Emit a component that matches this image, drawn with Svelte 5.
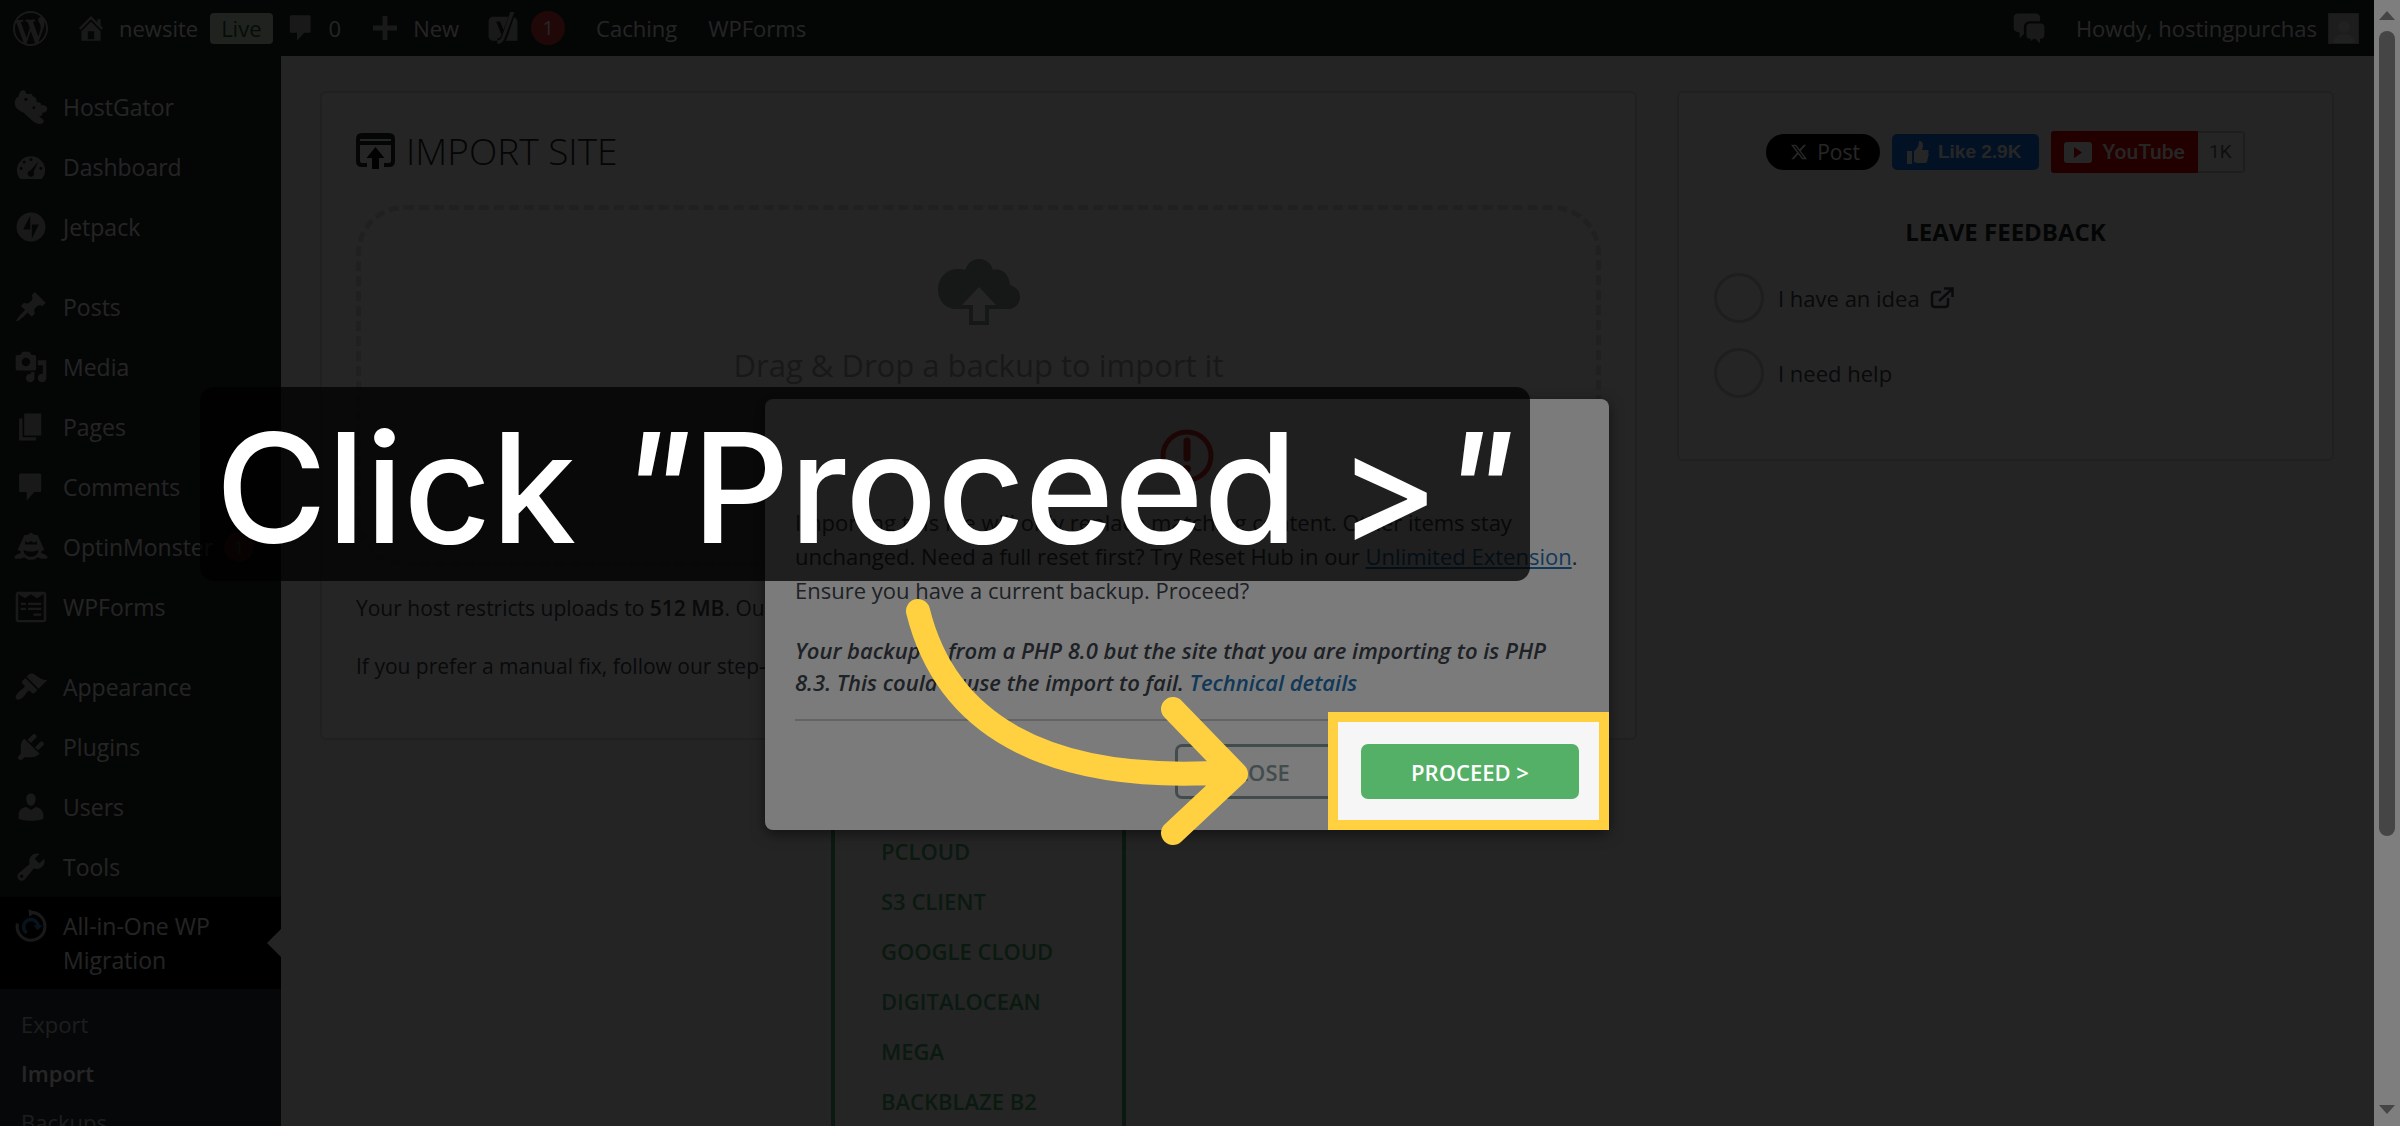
<script>
  const icons = {
    wordpress: 'M20 10c0-5.51-4.49-10-10-10C4.48 0 0 4.49 0 10c0 5.52 4.48 10 10 10 5.51 0 10-4.48 10-10zM7.78 15.37L4.37 6.22c.55-.02 1.17-.08 1.17-.08.5-.06.44-1.13-.06-1.11 0 0-1.45.11-2.37.11-.18 0-.37 0-.58-.01C4.12 2.69 6.87 1.11 10 1.11c2.33 0 4.45.87 6.05 2.34-.68-.11-1.65.39-1.65 1.58 0 .74.45 1.36.9 2.1.35.61.55 1.36.55 2.46 0 1.49-1.4 5-1.4 5l-3.03-8.37c.54-.02.82-.17.82-.17.5-.05.44-1.25-.06-1.22 0 0-1.44.12-2.38.12-.87 0-2.33-.12-2.33-.12-.5-.03-.56 1.2-.06 1.22l.92.08 1.26 3.41zM17.41 10c.24-.64.74-1.87.43-4.25.7 1.29 1.05 2.71 1.05 4.25 0 3.29-1.73 6.24-4.4 7.78.97-2.59 1.94-5.2 2.92-7.78zM6.1 18.09C3.12 16.65 1.11 13.53 1.11 10c0-1.3.23-2.48.72-3.59C3.25 10.3 4.67 14.2 6.1 18.09zm4.03-6.63l2.58 6.98c-.86.29-1.76.45-2.71.45-.79 0-1.57-.11-2.29-.33.81-2.38 1.62-4.74 2.42-7.1z',
    home: 'M16 8.5l1.53 1.53-1.06 1.06L10 4.6l-6.47 6.49-1.06-1.06L10 2.5l4 4v-2h2v4zm-6-2.46l6 5.99V18H4v-5.97zM12 17v-5H8v5h4z',
    comment: 'M5 2h10c.6 0 1 .4 1 1v9c0 .6-.4 1-1 1h-3l-4.500 5v-5H4c-.6 0-1-.4-1-1V3c0-.6.4-1 1-1z',
    plus: 'M17.500 8.500v3h-6v6h-3v-6h-6v-3h6v-6h3v6z',
    yoast: 'M4 3h9.300l-3 8.200L8.200 6H5.700l3.400 8.200c-.6 1.700-1.200 2.300-2.600 2.400V18H4c-1.700 0-3-1.300-3-3V6c0-1.700 1.300-3 3-3zM14.500 0h2.600l-5.800 15.600C10.300 18.300 9 19.900 6.500 20v-2.200c1.600-.2 2.300-1 2.900-2.700l.2-.6zM16.900 3.300C18.100 3.800 19 4.800 19 6v12h-7.500c.6-.9 1-1.900 1.400-2.900z',
    hostgator: 'M5.500 0c1 .3 1.500 1.200 1.600 2.200 1.200.3 2 .3 3-.2.6.8.8 1.500 1.500 2 1.600.7 1.800 1.800 1.700 3.200 1.700-.3 3 .5 2.800 2 1.600-.6 3.400.2 3.400 1.900 0 1.600-1.200 2.500-2.800 2.200.1 1.700-.8 2.200-2.200 2.100 2 1.200 3.600 2.300 2.800 3.700-1.300 1.600-4.600.8-6.400-1L5.500 13.300C2.400 12 .3 10.300.5 7.500c.1-1.800.7-3 2.200-3.500C3 2.100 3.500.6 5.500 0zM7 4.500a1 1 0 1 0 0 2 1 1 0 0 0 0-2zm4.700 5.100a.8.8 0 1 0 0 1.600.8.8 0 0 0 0-1.600z',
    dashboard: 'M3.800 17h12.400c1.400-1.400 2.100-3.200 2.100-5A8.300 8.300 0 0 0 1.700 12c0 1.800.7 3.600 2.100 5zM10 4.700a.9.900 0 1 1 0 1.800.9.900 0 0 1 0-1.800zM6 6.200A.9.900 0 1 1 6 8a.9.900 0 0 1 0-1.800zm8.600.3l-3.100 6.300a1.900 1.900 0 1 1-1.800-.8zM4.200 9.900a.9.900 0 1 1 0 1.800.9.900 0 0 1 0-1.800zm11.600 0a.9.900 0 1 1 0 1.800.9.900 0 0 1 0-1.800z',
    jetpack: 'M10 1.500a8.500 8.500 0 1 0 0 17 8.500 8.500 0 0 0 0-17zM9.600 11.400H5.400l4.200-8.200zm.9 5.400V8.600h4.200z',
    posts: 'M10.440 3.020l1.820-1.820 6.360 6.350-1.830 1.820c-1.050-.68-2.480-.57-3.410.36l-.75.75c-.92.93-1.040 2.350-.35 3.410l-1.830 1.820-2.410-2.410-2.800 2.790c-.42.42-3.380 2.710-3.800 2.290s1.860-3.390 2.280-3.810l2.790-2.790L4.100 9.360l1.830-1.820c1.050.69 2.480.57 3.400-.36l.75-.75c.93-.92 1.050-2.350.36-3.410z',
    media: 'M13 11V4c0-.55-.45-1-1-1h-1.670L9 1H5L3.670 3H2c-.55 0-1 .45-1 1v7c0 .55.45 1 1 1h10c.55 0 1-.45 1-1zM7 4.500c1.380 0 2.500 1.120 2.500 2.500S8.380 9.500 7 9.500 4.500 8.380 4.500 7 5.620 4.500 7 4.500zM14 6h5v10.500c0 1.380-1.120 2.500-2.500 2.500S14 17.880 14 16.500s1.120-2.500 2.500-2.500c.17 0 .34.02.5.05V9h-3V6zm-4 8.050V13h2v3.500c0 1.380-1.120 2.500-2.500 2.500S7 17.880 7 16.500 8.120 14 9.500 14c.17 0 .34.02.5.05z',
    pages: 'M6 15V2h10v13H6zm-1 1h8v2H3V5h2v11z',
    monster: 'M10 1.500l1.800 1.300 2.200.3.800 2 1.200 2.400 2 4.500c-1.200-.4-2 .2-2.100 1.300.9.900 2.600.8 3.700 2.300.3 1-.6 1.800-1.500 1.200-1.700.5-3-.2-4.100-.8-2.300 2-5.700 2-8 0-1.100.6-2.400 1.300-4.100.8-.9.600-1.800-.2-1.500-1.200 1.100-1.500 2.800-1.400 3.700-2.300-.1-1.100-.9-1.700-2.100-1.300l2-4.500 1.200-2.400.8-2 2.200-.3zM6.500 6.500v2h7v-2l-1.700 1-1.800-1-1.800 1zm-.8 5c1.200 1.600 7.400 1.600 8.600 0 .3 2.500-1.800 4.300-4.300 4.300s-4.600-1.800-4.300-4.300z',
    wpforms: 'M2.500 1h15c.8 0 1.500.7 1.500 1.500v15c0 .8-.7 1.500-1.500 1.500h-15c-.8 0-1.500-.7-1.500-1.500v-15C1 1.700 1.700 1 2.500 1zm0 1.300v15.400h15V2.300l-4 2.500L10 2.500 6.500 4.800zM4 7.500h3v1.300H4zm4.200 0H16v1.300H8.200zM4 10.500h3v1.300H4zm4.200 0H16v1.300H8.200zM11.500 13.800H16v1.400h-4.500z',
    appearance: 'M14.480 11.060L7.410 3.990l1.500-1.500c.5-.56 2.300-.47 3.510.32 1.210.8 1.430 1.280 2.910 2.100 1.180.64 2.450 1.260 4.450.85zm-.71.71L6.700 4.700 4.930 6.470c-.39.39-.39 1.020 0 1.410l1.060 1.060c.39.39.39 1.030 0 1.420-.6.6-1.430 1.110-2.210 1.690-.35.26-.7.53-1.010.84C1.430 14.230.4 16.080 1.400 17.070c.99 1 2.840-.03 4.180-1.360.31-.31.58-.66.85-1.020.57-.78 1.080-1.610 1.690-2.210.39-.39 1.020-.39 1.410 0l1.060 1.060c.39.39 1.020.39 1.410 0z',
    plugins: 'M13.110 4.360L9.870 7.600 8 5.730l3.240-3.240c.35-.34 1.050-.2 1.560.32.52.51.66 1.210.31 1.550zm-8 1.770l.91-1.120 9.010 9.010-1.190.84c-.71.71-2.630 1.160-3.820 1.160H6.140L4.900 17.260c-.59.59-1.540.59-2.120 0-.59-.58-.59-1.530 0-2.120l1.240-1.240v-3.880c0-1.130.4-3.190 1.090-3.890zm7.260 3.970l3.240-3.240c.34-.35 1.040-.21 1.550.31.52.51.66 1.210.31 1.550l-3.240 3.250z',
    users: 'M10 9.250c-2.270 0-2.730-3.440-2.730-3.440C7 4.020 7.820 2 9.970 2c2.160 0 2.980 2.020 2.710 3.810 0 0-.41 3.440-2.680 3.440zm0 2.570L12.720 10c2.390 0 4.520 2.330 4.520 4.530v2.490s-3.650 1.130-7.240 1.130c-3.650 0-7.240-1.130-7.240-1.130v-2.490c0-2.250 1.940-4.480 4.470-4.480z',
    tools: 'M16.680 9.770c-1.340 1.340-3.300 1.670-4.950.99l-5.410 6.520c-.99.99-2.590.99-3.580 0s-.99-2.590 0-3.570l6.520-5.420c-.68-1.650-.35-3.610.99-4.950 1.280-1.280 3.120-1.620 4.720-1.060l-2.890 2.890 2.820 2.820 2.860-2.870c.53 1.580.18 3.390-1.080 4.650zM3.810 16.210c.4.39 1.040.39 1.430 0 .4-.4.4-1.040 0-1.430-.39-.4-1.030-.4-1.430 0-.39.39-.39 1.030 0 1.430z',
    chat: 'M3.500 1.500h10.500c1.500 0 2.500 1 2.500 2.500V6H10.500C8.600 6 7 7.400 7 9.300v4.200L4.500 16v-3.500C2.500 12.500 1 11.500 1 10V4c0-1.500 1-2.500 2.500-2.500zM10.500 7.300H17c1.200 0 2 .8 2 2v5c0 1.200-.8 2-2 2h-.5v2.700l-2.800-2.700h-1l-1.700 1.500v-1.500h-.5c-1.200 0-2-.8-2-2v-5c0-1.200.8-2 2-2z'
  };

  const menuGroups = [
    [
      { label: 'HostGator', icon: 'hostgator' },
      { label: 'Dashboard', icon: 'dashboard' },
      { label: 'Jetpack', icon: 'jetpack' }
    ],
    [
      { label: 'Posts', icon: 'posts' },
      { label: 'Media', icon: 'media' },
      { label: 'Pages', icon: 'pages' },
      { label: 'Comments', icon: 'comment' },
      { label: 'OptinMonster', icon: 'monster', count: 1 },
      { label: 'WPForms', icon: 'wpforms' }
    ],
    [
      { label: 'Appearance', icon: 'appearance' },
      { label: 'Plugins', icon: 'plugins' },
      { label: 'Users', icon: 'users' },
      { label: 'Tools', icon: 'tools' }
    ]
  ];

  const providers = ['pCloud', 'S3 Client', 'Google Cloud', 'DigitalOcean', 'Mega', 'Backblaze B2'];

  let feedback = $state('');
</script>

{#snippet icon(name)}
  <svg class="icon" viewBox="0 0 20 20" aria-hidden="true">
    <path fill="currentColor" fill-rule="evenodd" d={icons[name]} />
  </svg>
{/snippet}

<div class="screen">
  <div class="page">
    <header class="adminbar">
      <nav class="bar-left" aria-label="Toolbar">
        <a class="bar-logo" href="#about" aria-label="About WordPress">{@render icon('wordpress')}</a>
        <a class="bar-site" href="#site">{@render icon('home')}<span>newsite</span><span class="live">Live</span></a>
        <a class="bar-comments" href="#comments">{@render icon('comment')}<span>0</span></a>
        <a class="bar-new" href="#new">{@render icon('plus')}<span>New</span></a>
        <a class="bar-seo" href="#seo" aria-label="SEO, 1 notification">{@render icon('yoast')}<span class="count">1</span></a>
        <a class="bar-text" href="#caching">Caching</a>
        <a class="bar-text" href="#wpforms">WPForms</a>
      </nav>
      <div class="bar-right">
        <a class="bar-chat" href="#chat" aria-label="Notes">{@render icon('chat')}</a>
        <a class="bar-user" href="#profile">
          <span>Howdy, hostingpurchas</span>
          <svg class="avatar" viewBox="0 0 31 31" aria-hidden="true">
            <rect width="31" height="31" fill="#a0a0a0" />
            <rect x="1" y="1" width="29" height="29" fill="#c4c4c4" />
            <circle cx="16" cy="14" r="6" fill="#dcdcdc" />
            <path d="M5 30c1-6 5-9 11-9s10 3 11 9z" fill="#dcdcdc" />
          </svg>
        </a>
      </div>
    </header>

    <div class="body">
      <nav class="sidebar" aria-label="Main menu">
        {#each menuGroups as group}
          <ul>
            {#each group as item}
              <li>
                <a href="#{item.icon}">
                  {@render icon(item.icon)}
                  <span>{item.label}</span>
                  {#if item.count}<span class="count">{item.count}</span>{/if}
                </a>
              </li>
            {/each}
          </ul>
        {/each}
        <a class="current" href="#migration">
          <svg class="icon" viewBox="0 0 20 20" fill="none" aria-hidden="true">
            <path d="M2 8.500a8.200 8.200 0 1 0 8-6.500" stroke="#a7aaad" stroke-width="1.800" />
            <path d="M8.500 0l4 2-3.500 2.600z" fill="#a7aaad" />
            <path d="M7.500 14a4.300 4.300 0 1 1 6.800-3.500" stroke="#2f86c4" stroke-width="2" />
            <path d="M11.500 9.500h5.400l-3 3z" fill="#2f86c4" />
          </svg>
          <span>All-in-One WP Migration</span>
        </a>
        <ul class="submenu">
          <li><a href="#export">Export</a></li>
          <li><a class="active" href="#import">Import</a></li>
          <li><a href="#backups">Backups</a></li>
        </ul>
      </nav>

      <main>
        <section class="panel import">
          <h1>
            <svg class="import-icon" viewBox="0 0 39 36" aria-hidden="true">
              <path d="M11 32H6q-4 0-4-4V6q0-4 4-4h27q4 0 4 4v22q0 4-4 4h-5M2 10h35" fill="none" stroke="#1d2327" stroke-width="4" />
              <path d="M4 3h31v3H4z" fill="#1d2327" />
              <path d="M19.500 14l9 11H23v11h-7V25h-5.500z" fill="#111" />
            </svg>
            <span>IMPORT SITE</span>
          </h1>
          <div class="dropzone">
            <svg class="cloud" viewBox="0 0 82 66" aria-hidden="true">
              <path fill="#979a9c" fill-rule="evenodd" d="M18 50C8 50 0 42 0 31 0 18 9 10 20 10c3 0 5 0 7 1C30 4 34 0 41 0s12 4 14 11c9-2 16 4 17 15 6 2 10 6 10 12 0 7-5 12-12 12H51v16H31V50zM41 28L24 46h11v16h12V46h11z" />
            </svg>
            <p>Drag &amp; Drop a backup to import it</p>
            <ul class="providers">
              {#each providers as provider}
                <li><a href="#{provider}">{provider}</a></li>
              {/each}
            </ul>
          </div>
          <p class="note">Your host restricts uploads to <strong>512 MB</strong>. Our Unlimited Extension bypasses this!</p>
          <p class="note">If you prefer a manual fix, follow our step-by-step guide on raising your upload limit.</p>
        </section>

        <aside class="panel side">
          <div class="social">
            <button class="post" type="button">
              <svg viewBox="0 0 24 24" aria-hidden="true"><path fill="currentColor" d="M18.240 2.250h3.310l-7.230 8.260 8.500 11.240H16.170l-5.210-6.820L4.990 21.750H1.680l7.730-8.840L1.250 2.250H8.080l4.710 6.230zm-1.160 17.520h1.830L7.080 4.130H5.120z" /></svg>
              <span>Post</span>
            </button>
            <button class="like" type="button">
              <svg viewBox="0 0 22 23" aria-hidden="true"><path fill="currentColor" d="M0 10h5v13H0zM7 10c3-2 5-5 5-10 3 0 4 2 4 4 0 2-.500 3-1 5h5c2 0 2 2 1 3 1 1 1 2 0 3 .6 1 .3 2-.6 3 .4 2-.6 4-2.400 4H11c-2 0-3-1-4-1z" /></svg>
              <span>Like 2.9K</span>
            </button>
            <div class="youtube">
              <button type="button">
                <svg viewBox="0 0 28 21" aria-hidden="true"><rect width="28" height="21" rx="3" fill="currentColor" /><path d="M10 5l8 5.500-8 5.500z" fill="#e60000" /></svg>
                <span>YouTube</span>
              </button>
              <span class="subs">1K</span>
            </div>
          </div>
          <h2>LEAVE FEEDBACK</h2>
          <div class="choice">
            <input id="idea" type="radio" name="feedback" value="idea" bind:group={feedback} />
            <label for="idea">I have an idea
              <svg viewBox="0 0 24 22" aria-hidden="true"><path fill="none" stroke="currentColor" stroke-width="2.500" d="M11 5H5Q2 5 2 8v9q0 3 3 3h10q3 0 3-3v-6M9 14L22 2M14 1.500h8.500V10" /></svg>
            </label>
          </div>
          <div class="choice">
            <input id="help" type="radio" name="feedback" value="help" bind:group={feedback} />
            <label for="help">I need help</label>
          </div>
        </aside>
      </main>
    </div>

    <div class="backdrop">
      <div class="dialog" role="dialog" aria-modal="true" aria-label="Import confirmation">
        <svg class="alert" viewBox="0 0 54 54" aria-hidden="true">
          <circle cx="27" cy="27" r="24" fill="none" stroke="#e0352b" stroke-width="5" />
          <path d="M27 12v17" stroke="#e0352b" stroke-width="7" stroke-linecap="round" />
          <circle cx="27" cy="40" r="4" fill="#e0352b" />
        </svg>
        <p class="message">Importing this file will only replace matching content. Other items stay unchanged. Need a full reset first? Try Reset Hub in our <a href="#unlimited">Unlimited Extension</a>. Ensure you have a current backup. Proceed?</p>
        <p class="warning">Your backup is from a PHP 8.0 but the site that you are importing to is PHP 8.3. This could cause the import to fail. <a href="#details">Technical details</a></p>
        <div class="actions">
          <button class="close" type="button">CLOSE</button>
          <button class="proceed" type="button">PROCEED &gt;</button>
        </div>
        <div class="spotlight"></div>
      </div>
    </div>
  </div>

  <div class="scrollbar" aria-hidden="true">
    <svg viewBox="0 0 16 9"><path d="M8 0l8 9H0z" fill="#8b8b8b" /></svg>
    <div class="thumb"></div>
    <svg viewBox="0 0 16 9"><path d="M0 0h16L8 9z" fill="#8b8b8b" /></svg>
  </div>

  <div class="caption">Click <i>"</i>Proceed &gt;<i>"</i></div>

  <svg class="arrow" viewBox="0 0 360 270" aria-hidden="true">
    <path d="M18 21C45 130 140 195 330 182M273 119l63 65-63 59" fill="none" stroke="#ffd140" stroke-width="24" stroke-linecap="round" stroke-linejoin="round" />
  </svg>
</div>

<style>
  :global(body) {
    margin: 0;
  }

  .screen {
    position: relative;
    display: flex;
    height: 100vh;
    overflow: hidden;
    background: #f0f0f1;
    color: #3c434a;
    font-family: "Open Sans", "Noto Sans", sans-serif;
    font-size: 23px;
  }

  .screen :is(ul, p, h1, h2) {
    margin: 0;
    padding: 0;
    list-style: none;
  }

  .screen a {
    color: inherit;
    text-decoration: none;
  }

  .screen button {
    font: inherit;
    border: 0;
    cursor: pointer;
  }

  .icon {
    flex: none;
    width: 34px;
    height: 34px;
    color: #a7aaad;
  }

  .page {
    flex: 1;
    display: flex;
    flex-direction: column;
    position: relative;
    min-width: 0;
  }

  /* Admin bar */
  .adminbar {
    flex: none;
    display: flex;
    justify-content: space-between;
    height: 56px;
    padding: 0 15px 0 13px;
    background: #1d2327;
    color: #f0f0f1;
    font-size: 22px;
  }

  .bar-left,
  .bar-right,
  .adminbar a {
    display: flex;
    align-items: center;
  }

  .bar-left .icon {
    width: 32px;
    height: 32px;
  }

  .bar-left .bar-logo .icon {
    width: 35px;
    height: 35px;
  }

  .bar-site {
    gap: 12px;
    margin-left: 27px;
  }

  .live {
    padding: 0 11px;
    border-radius: 4px;
    background: #d7e4d0;
    color: #2c5a2c;
    line-height: 31px;
  }

  .bar-comments {
    gap: 12px;
    margin-left: 12px;
    color: #a7aaad;
  }

  .bar-new {
    gap: 12px;
    margin-left: 28px;
  }

  .bar-seo {
    gap: 12px;
    margin-left: 28px;
  }

  .bar-text {
    margin-left: 31px;
  }

  .count {
    width: 34px;
    border-radius: 17px;
    background: #d63638;
    color: #fff;
    font-size: 20px;
    line-height: 34px;
    text-align: center;
  }

  .bar-chat {
    margin-right: 30px;
  }

  .bar-user {
    gap: 11px;
  }

  .avatar {
    width: 31px;
    height: 31px;
  }

  /* Sidebar */
  .body {
    flex: 1;
    display: flex;
    min-height: 0;
  }

  .sidebar {
    flex: none;
    width: 281px;
    padding-top: 21px;
    background: #1d2327;
    color: #f0f0f1;
  }

  .sidebar ul + ul {
    margin-top: 20px;
  }

  .sidebar a {
    display: flex;
    align-items: center;
    gap: 15px;
    height: 60px;
    padding-left: 14px;
    white-space: nowrap;
  }

  .sidebar .count {
    width: 30px;
    font-size: 18px;
    line-height: 30px;
    margin-left: -4px;
  }

  .sidebar .current {
    position: relative;
    align-items: flex-start;
    height: 68px;
    padding: 12px 50px 12px 14px;
    background: #000;
    line-height: 34px;
    white-space: normal;
  }

  .sidebar .current::after {
    content: "";
    position: absolute;
    right: 0;
    top: 32px;
    border: 14px solid transparent;
    border-left: 0;
    border-right-color: #f0f0f1;
  }

  .sidebar .submenu {
    margin: 0;
    padding-top: 10px;
    height: 400px;
    background: #2c3338;
    color: #c3c4c7;
    font-size: 22px;
  }

  .submenu a {
    height: 49px;
    padding-left: 21px;
  }

  .submenu .active {
    color: #fff;
    font-weight: 600;
  }

  /* Content */
  main {
    flex: 1;
    display: flex;
    align-items: flex-start;
    gap: 40px;
    padding: 35px 40px 0 39px;
  }

  .panel {
    box-sizing: border-box;
    border: 2px solid #dadada;
    border-radius: 6px;
    background: #f9f9f9;
  }

  .import {
    flex: 1;
    min-height: 649px;
    padding: 31px 34px;
  }

  h1 {
    display: flex;
    align-items: center;
    gap: 11px;
    color: #1d2327;
    font-size: 37px;
    font-weight: 300;
    line-height: 54px;
  }

  .import-icon {
    width: 39px;
    height: 36px;
  }

  .dropzone {
    position: relative;
    display: flex;
    flex-direction: column;
    align-items: center;
    box-sizing: border-box;
    height: 361px;
    margin: 27px 0 21px;
    padding-top: 49px;
    border: 5px dashed #d9d9d9;
    border-radius: 48px;
    color: #a4a4a4;
    font-size: 31px;
    line-height: 44px;
  }

  .cloud {
    width: 82px;
    height: 66px;
    margin-bottom: 18px;
  }

  .providers {
    position: absolute;
    top: 100%;
    left: 0;
    right: 0;
    width: 287px;
    background: #f9f9f9;
    border: solid #4caf6f;
    border-width: 0 4px;
  }

  .screen .providers {
    margin: 0 auto;
    padding: 265px 0 40px;
  }

  .screen .providers a {
    display: block;
    padding-left: 46px;
    color: #4caf6f;
    font-size: 22px;
    font-weight: 600;
    line-height: 50px;
    text-transform: uppercase;
  }

  .note {
    font-size: 21px;
    line-height: 42px;
    white-space: nowrap;
  }

  .screen .note + .note {
    margin-top: 16px;
  }

  .note strong {
    font-weight: 600;
  }

  .side {
    flex: none;
    width: 657px;
    min-height: 370px;
    padding: 38px 35px 0;
  }

  .social {
    display: flex;
    justify-content: center;
    align-items: center;
    gap: 12px;
  }

  .social button {
    display: flex;
    align-items: center;
    color: #fff;
  }

  .screen .post {
    gap: 9px;
    height: 36px;
    padding: 0 20px 0 24px;
    border-radius: 18px;
    background: #000;
    font-size: 21px;
    font-weight: 500;
  }

  .post svg {
    width: 18px;
    height: 20px;
  }

  .screen .like {
    gap: 9px;
    height: 36px;
    padding: 0 18px 0 15px;
    border-radius: 5px;
    background: #1877f2;
    font-family: "Liberation Sans", sans-serif;
    font-size: 19px;
    font-weight: 700;
  }

  .like svg {
    width: 22px;
    height: 23px;
  }

  .youtube {
    display: flex;
  }

  .screen .youtube button {
    gap: 10px;
    height: 42px;
    padding: 0 13px;
    border-radius: 3px 0 0 3px;
    background: #e60000;
    font-family: Roboto, sans-serif;
    font-size: 21px;
    font-weight: 500;
  }

  .youtube svg {
    width: 28px;
    height: 21px;
  }

  .subs {
    box-sizing: border-box;
    width: 47px;
    border: 2px solid #ccc;
    border-left: 0;
    border-radius: 0 3px 3px 0;
    color: #666;
    font-family: Roboto, sans-serif;
    font-size: 19px;
    line-height: 38px;
    text-align: center;
  }

  h2 {
    color: #1d2327;
    font-size: 24px;
    font-weight: 700;
    line-height: 34px;
    text-align: center;
  }

  .screen h2 {
    margin: 42px 0 24px;
  }

  .choice {
    display: flex;
    align-items: center;
    gap: 14px;
    margin-bottom: 25px;
  }

  .choice input {
    appearance: none;
    box-sizing: border-box;
    width: 50px;
    height: 50px;
    margin: 0;
    border: 3px solid #c8c8c8;
    border-radius: 50%;
  }

  .choice input:checked {
    border-width: 14px;
  }

  .choice label {
    display: flex;
    align-items: center;
    gap: 10px;
    font-size: 22px;
  }

  .choice svg {
    width: 24px;
    height: 22px;
  }

  /* Confirmation dialog */
  .backdrop {
    position: absolute;
    inset: 0;
    z-index: 2;
    display: flex;
    justify-content: center;
    align-items: flex-start;
    padding-top: 399px;
    background: rgba(0, 0, 0, 0.7);
  }

  .dialog {
    position: relative;
    box-sizing: border-box;
    display: flex;
    flex-direction: column;
    width: 844px;
    padding: 30px 30px 31px;
    border-radius: 8px;
    background: #f6f6f6;
    box-shadow: 0 4px 14px rgba(0, 0, 0, 0.5);
  }

  .alert {
    align-self: center;
    width: 54px;
    height: 54px;
    margin-bottom: 22px;
  }

  .message {
    font-size: 22px;
    line-height: 34px;
  }

  .screen .message {
    margin: 0 -6px 27px 0;
  }

  .screen .message a {
    color: #2271b1;
    text-decoration: underline;
  }

  .warning {
    font-size: 22px;
    font-style: italic;
    font-weight: 600;
    line-height: 32px;
  }

  .screen .warning {
    margin: 0 0 21px;
  }

  .screen .warning a {
    color: #2271b1;
  }

  .actions {
    display: flex;
    justify-content: flex-end;
    gap: 24px;
    padding-top: 23px;
    border-top: 2px solid #c8c8c8;
  }

  .screen .actions button {
    box-sizing: border-box;
    height: 55px;
    border-radius: 7px;
    font-size: 22px;
    font-weight: 600;
  }

  .screen .close {
    width: 162px;
    border: 3px solid #87999a;
    background: transparent;
    color: #87999a;
  }

  .screen .proceed {
    width: 218px;
    background: #54b066;
    color: #fff;
  }

  /* Frame round the step's target; its shadow dims everything else */
  .spotlight {
    position: absolute;
    right: 0;
    bottom: 0;
    box-sizing: border-box;
    width: 281px;
    height: 118px;
    border: 10px solid #ffd140;
    box-shadow: 0 0 0 3000px rgba(0, 0, 0, 0.5);
    pointer-events: none;
  }

  .scrollbar {
    flex: none;
    display: flex;
    flex-direction: column;
    align-items: center;
    box-sizing: border-box;
    width: 26px;
    padding: 11px 0 12px;
    background: #fcfcfc;
  }

  .scrollbar svg {
    width: 16px;
    height: 9px;
  }

  .thumb {
    width: 16px;
    height: 73%;
    margin: 11px 0 auto;
    border-radius: 8px;
    background: #8b8b8b;
  }

  /* Tutorial annotations */
  .caption {
    position: absolute;
    z-index: 3;
    left: 200px;
    top: 387px;
    box-sizing: border-box;
    width: 1330px;
    height: 194px;
    border-radius: 14px;
    background: rgba(0, 0, 0, 0.75);
    color: #fff;
    font-family: Inter, sans-serif;
    font-size: 152px;
    font-weight: 500;
    line-height: 202px;
    text-align: center;
    white-space: nowrap;
  }

  .arrow {
    position: absolute;
    z-index: 4;
    left: 900px;
    top: 590px;
    width: 360px;
    height: 270px;
    pointer-events: none;
  }
</style>
